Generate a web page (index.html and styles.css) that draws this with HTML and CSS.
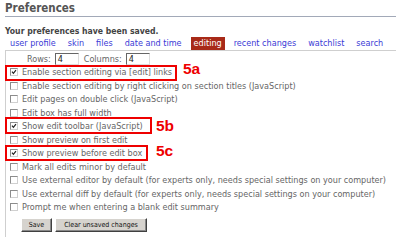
FILE: index.html
```html
<!DOCTYPE html>
<html lang="en">
<head>
  <meta charset="UTF-8">
  <title>Preferences</title>
  <link rel="stylesheet" href="styles.css">
</head>
<body>
  <div class="page">
    <h1 class="title">Preferences</h1>
    <p class="notice">Your preferences have been saved.</p>

    <ul class="tabs">
      <li><a href="#">user profile</a></li>
      <li><a href="#">skin</a></li>
      <li><a href="#">files</a></li>
      <li><a href="#">date and time</a></li>
      <li><a href="#" class="current">editing</a></li>
      <li><a href="#">recent changes</a></li>
      <li><a href="#">watchlist</a></li>
      <li><a href="#">search</a></li>
    </ul>

    <div class="panel">
      <div class="size-row">
        <span>Rows:</span><span class="field">4</span>
        <span>Columns:</span><span class="field">4</span>
      </div>

      <ul class="options">
        <li><span class="box checked"><svg viewBox="0 0 8 8"><path d="M1.3 3.6 L3.2 5.8 L6.6 1.4"/></svg></span>Enable section editing via [edit] links</li>
        <li><span class="box"></span>Enable section editing by right clicking on section titles (JavaScript)</li>
        <li><span class="box"></span>Edit pages on double click (JavaScript)</li>
        <li><span class="box"></span>Edit box has full width</li>
        <li><span class="box checked"><svg viewBox="0 0 8 8"><path d="M1.3 3.6 L3.2 5.8 L6.6 1.4"/></svg></span>Show edit toolbar (JavaScript)</li>
        <li><span class="box"></span>Show preview on first edit</li>
        <li><span class="box checked"><svg viewBox="0 0 8 8"><path d="M1.3 3.6 L3.2 5.8 L6.6 1.4"/></svg></span>Show preview before edit box</li>
        <li><span class="box"></span>Mark all edits minor by default</li>
        <li><span class="box"></span>Use external editor by default (for experts only, needs special settings on your computer)</li>
        <li><span class="box"></span>Use external diff by default (for experts only, needs special settings on your computer)</li>
        <li><span class="box"></span>Prompt me when entering a blank edit summary</li>
      </ul>

      <div class="buttons">
        <button type="button" class="btn-save">Save</button>
        <button type="button" class="btn-clear">Clear unsaved changes</button>
      </div>
    </div>

    <!-- annotation callouts drawn over the form -->
    <div class="mark mark-a"></div>
    <span class="mark-label label-a">5a</span>
    <div class="mark mark-b"></div>
    <span class="mark-label label-b">5b</span>
    <div class="mark mark-c"></div>
    <span class="mark-label label-c">5c</span>
  </div>
</body>
</html>
```

FILE: styles.css
```css
* {
  box-sizing: border-box;
  margin: 0;
  padding: 0;
}

body {
  background: #fff;
  font-family: "DejaVu Sans Condensed", "DejaVu Sans", sans-serif;
  font-stretch: condensed;
  font-size: 9px;
  color: #666;
}

.page {
  position: relative;
  padding-left: 5px;
  width: 396px;
  height: 242px;
  overflow: hidden;
}

.title {
  font-size: 11.5px;
  font-weight: bold;
  line-height: 16px;
  color: #555;
  border-bottom: 1px solid #a2a9b8;
}

.notice {
  margin-top: 8px;
  font-size: 8.6px;
  font-weight: bold;
  line-height: 12px;
  color: #444;
}

.tabs {
  list-style: none;
  display: flex;
  gap: 6px;
  padding-left: 2px;
}

.tabs a {
  display: block;
  padding: 0 3px;
  line-height: 13px;
  color: #3b3bd6;
  text-decoration: none;
}

.tabs a.current {
  background: #a82a18;
  color: #fff;
}

.panel {
  border-top: 1px solid #cfcfcf;
  border-left: 1px solid #cfcfcf;
  padding-top: 1px;
  padding-bottom: 5px;
}

.size-row {
  display: flex;
  align-items: center;
  gap: 4px;
  height: 13.5px;
  margin-left: 21px;
}

.field {
  width: 24px;
  height: 12px;
  padding-left: 2px;
  line-height: 10px;
  color: #222;
  border: 1px solid;
  border-color: #666 #ddd #ddd #666;
  margin-right: 1px;
}

.options {
  list-style: none;
}

.options li {
  display: flex;
  align-items: center;
  height: 13.5px;
  padding-left: 4px;
  white-space: nowrap;
}

.box {
  flex: none;
  width: 8px;
  height: 8px;
  margin-right: 4px;
  border: 1px solid;
  border-color: #8c8c8c #d0d0d0 #d0d0d0 #8c8c8c;
  background: #fff;
}

.box svg {
  display: block;
  width: 6px;
  height: 6px;
}

.box path {
  fill: none;
  stroke: #222;
  stroke-width: 1.6;
}

.buttons {
  display: flex;
  gap: 3px;
  margin-top: 4px;
  margin-left: 15px;
}

.buttons button {
  height: 14px;
  padding: 0;
  font-family: "DejaVu Sans Condensed", "DejaVu Sans", sans-serif;
  font-stretch: condensed;
  font-size: 7px;
  color: #111;
  background: #d6d3ce;
  border: 1px solid;
  border-color: #fff #404040 #404040 #fff;
  box-shadow: inset -1px -1px 0 #888;
}

.btn-save {
  width: 31px;
}

.btn-clear {
  width: 92px;
}

.mark {
  position: absolute;
  left: 5px;
  border: 2px solid #ee0000;
}

.mark-a {
  top: 65px;
  width: 172px;
  height: 16px;
}

.mark-b {
  top: 117px;
  width: 147px;
  height: 17px;
}

.mark-c {
  top: 145px;
  width: 143px;
  height: 16px;
}

.mark-label {
  position: absolute;
  font-family: "Liberation Sans", Arial, sans-serif;
  font-stretch: normal;
  font-weight: bold;
  font-size: 15.5px;
  line-height: 15px;
  color: #ee0000;
}

.label-a {
  left: 183px;
  top: 61px;
}

.label-b {
  left: 156px;
  top: 118px;
}

.label-c {
  left: 156px;
  top: 143px;
}
```
